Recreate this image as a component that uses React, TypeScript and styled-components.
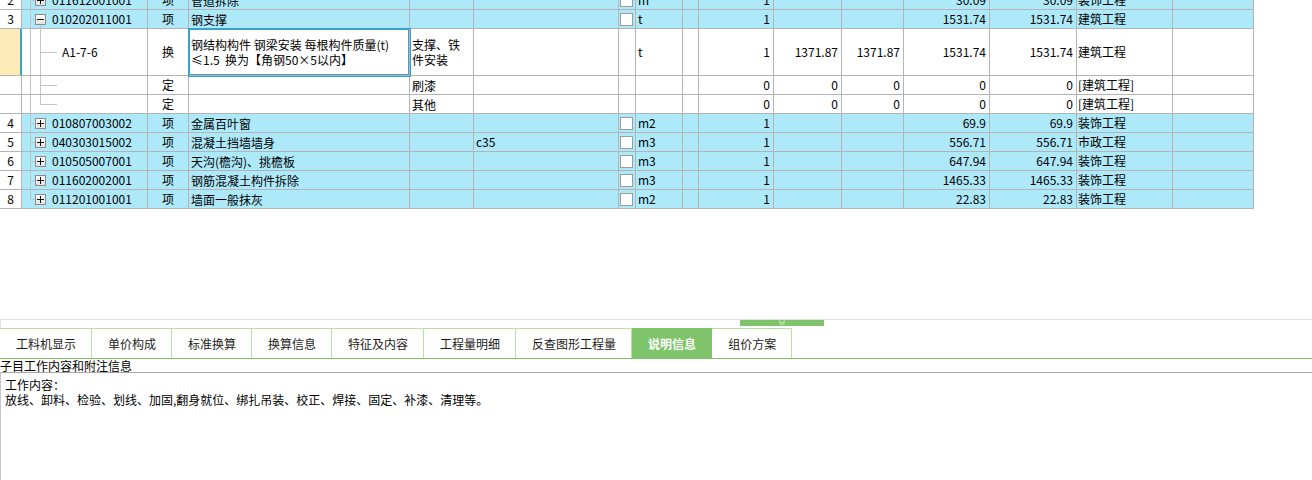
import React from "react";
import styled, { createGlobalStyle } from "styled-components";

const COLS =
  "22px 126px 41px 221px 64px 145px 17px 47px 16px 75px 68px 62px 86px 87px 96px 81px";
const LINE = "#b4b4b4";
const GUIDE = "#c4c4c4";
const ROW_BLUE = "#aee9fa";
const ACCENT = "#3a9fd1";
const GREEN = "#7fc46b";
const GREEN_LIGHT = "#b6e3a1";

const GlobalStyle = createGlobalStyle`
  html, body {
    margin: 0;
    padding: 0;
    background: #fff;
  }
  body {
    font-family: "Noto Sans CJK SC", "Noto Sans", sans-serif;
    font-size: 12px;
    color: #000;
    overflow: hidden;
  }
`;

const Page = styled.div`
  width: 1312px;
  height: 480px;
  display: flex;
  flex-direction: column;
  overflow: hidden;
`;

const GridArea = styled.div`
  height: 319px;
  flex: none;
  overflow: hidden;
`;

const Table = styled.div`
  width: 1254px;
  margin-top: -9px;
`;

const Row = styled.div<{ $h: number; $blue: boolean }>`
  display: grid;
  grid-template-columns: ${COLS};
  height: ${(p) => p.$h}px;
  background: ${(p) => (p.$blue ? ROW_BLUE : "#fff")};
`;

const Cell = styled.div<{ $align?: "left" | "right" | "center" }>`
  box-sizing: border-box;
  border-right: 1px solid ${LINE};
  border-bottom: 1px solid ${LINE};
  display: flex;
  align-items: center;
  justify-content: ${(p) =>
    p.$align === "right" ? "flex-end" : p.$align === "center" ? "center" : "flex-start"};
  padding: ${(p) => (p.$align === "right" ? "0 3px 0 0" : p.$align === "center" ? "0" : "0 0 0 2px")};
  line-height: 14px;
  white-space: nowrap;
  overflow: hidden;
`;

const RowHead = styled(Cell)<{ $selected?: boolean }>`
  background: ${(p) => (p.$selected ? "#feecb8" : "#fff")};
  border-right: ${(p) => (p.$selected ? `2px solid ${ACCENT}` : `1px solid ${LINE}`)};
`;

type Guide = "root" | "rootHalf" | "rootStub" | "child" | "childHalf" | "childStub" | "childTail";

const guideLayer: Record<Guide, string> = {
  root: "8px 0 / 1px 100%",
  rootHalf: "8px 0 / 1px 50%",
  rootStub: "8px 50% / 5px 1px",
  child: "18px 0 / 1px 100%",
  childHalf: "18px 0 / 1px 50%",
  childStub: "18px 50% / 17px 1px",
  childTail: "18px 100% / 1px 4px",
};

const CodeCell = styled(Cell)<{ $guides: Guide[]; $indent: number }>`
  padding-left: ${(p) => p.$indent}px;
  background: ${(p) =>
    p.$guides.map((g) => `linear-gradient(${GUIDE}, ${GUIDE}) ${guideLayer[g]} no-repeat`).join(", ")};
`;

const WrapCell = styled(Cell)`
  white-space: normal;
  line-height: 15px;
`;

const EditCell = styled(WrapCell)`
  position: relative;
  z-index: 1;
  background: #fff;
  box-shadow: 0 0 0 1px ${ACCENT}, inset 0 0 0 1px ${ACCENT};
`;

const CheckCell = styled(Cell)`
  padding: 0;
`;

const MajorCell = styled(Cell)`
  padding-left: 1px;
`;

const Toggle = styled.span`
  box-sizing: border-box;
  flex: none;
  width: 11px;
  height: 11px;
  margin: 0 6px 0 13px;
  border: 1px solid #8c8c8c;
  background: linear-gradient(#fff, #e2e2e2);
  display: flex;
  align-items: center;
  justify-content: center;
`;

const Check = styled.span`
  box-sizing: border-box;
  width: 13px;
  height: 13px;
  margin-left: 1px;
  border: 1px solid #9c9c9c;
  background: #fff;
`;

const Splitter = styled.div`
  box-sizing: border-box;
  height: 9px;
  flex: none;
  border-top: 1px solid #e1e1e1;
  border-left: 1px solid #e1e1e1;
  display: flex;
  align-items: flex-start;
`;

const Handle = styled.div`
  margin-left: 739px;
  width: 84px;
  height: 6px;
  background: ${GREEN};
  display: flex;
  justify-content: center;
  align-items: flex-end;
`;

const TabBar = styled.div`
  box-sizing: border-box;
  height: 31px;
  flex: none;
  display: flex;
  border-bottom: 1px solid ${GREEN};
`;

const Tab = styled.div<{ $active?: boolean }>`
  box-sizing: border-box;
  height: 30px;
  padding: 0 15px 0 16px;
  border-top: 1px solid ${(p) => (p.$active ? GREEN : GREEN_LIGHT)};
  border-right: 1px solid ${(p) => (p.$active ? GREEN : GREEN_LIGHT)};
  background: ${(p) => (p.$active ? GREEN : "#fff")};
  color: ${(p) => (p.$active ? "#fff" : "#1c1c1c")};
  font-weight: ${(p) => (p.$active ? "bold" : "normal")};
  display: flex;
  align-items: center;
  white-space: nowrap;
`;

const InfoTitle = styled.div`
  height: 14px;
  flex: none;
  box-sizing: border-box;
  line-height: 13px;
  border-bottom: 1px solid #a9a9a9;
  white-space: nowrap;
`;

const InfoBody = styled.div`
  flex: 1;
  border-left: 1px solid #c6c6ce;
  padding: 4px 0 0 4px;
  line-height: 15px;
`;

const PlusMinus = ({ open }: { open?: boolean }) => (
  <svg width="7" height="7" viewBox="0 0 7 7">
    <path d="M0 3.5H7" stroke="#111" strokeWidth="1" />
    {!open && <path d="M3.5 0V7" stroke="#111" strokeWidth="1" />}
  </svg>
);

type RowData = {
  num?: string;
  toggle?: "+" | "-";
  code?: string;
  guides: Guide[];
  indent: number;
  type: string;
  name: React.ReactNode;
  feature?: React.ReactNode;
  spec?: string;
  check?: boolean;
  unit?: string;
  qty?: string;
  p1?: string;
  p2?: string;
  t1?: string;
  t2?: string;
  major?: string;
  blue: boolean;
  h: number;
  selected?: boolean;
  editing?: boolean;
};

const item = (
  num: string,
  code: string,
  name: string,
  unit: string,
  total: string,
  major: string,
  extra: Partial<RowData> = {}
): RowData => ({
  num,
  toggle: "+",
  code,
  guides: ["root", "rootStub"],
  indent: 0,
  type: "项",
  name,
  check: true,
  unit,
  qty: "1",
  t1: total,
  t2: total,
  major,
  blue: true,
  h: 19,
  ...extra,
});

const rows: RowData[] = [
  item("2", "011612001001", "管道拆除", "m", "30.09", "装饰工程"),
  item("3", "010202011001", "钢支撑", "t", "1531.74", "建筑工程", {
    toggle: "-",
    guides: ["root", "rootStub", "childTail"],
  }),
  {
    code: "A1-7-6",
    guides: ["root", "child", "childStub"],
    indent: 40,
    type: "换",
    name: (
      <>
        钢结构构件 钢梁安装 每根构件质量(t)
        <br />
        ≤1.5&nbsp;&nbsp;换为【角钢50×5以内】
      </>
    ),
    feature: (
      <>
        支撑、铁
        <br />
        件安装
      </>
    ),
    unit: "t",
    qty: "1",
    p1: "1371.87",
    p2: "1371.87",
    t1: "1531.74",
    t2: "1531.74",
    major: "建筑工程",
    blue: false,
    h: 47,
    selected: true,
    editing: true,
  },
  {
    guides: ["root", "child", "childStub"],
    indent: 0,
    type: "定",
    name: "",
    feature: "刷漆",
    qty: "0",
    p1: "0",
    p2: "0",
    t1: "0",
    t2: "0",
    major: "[建筑工程]",
    blue: false,
    h: 19,
  },
  {
    guides: ["root", "childHalf", "childStub"],
    indent: 0,
    type: "定",
    name: "",
    feature: "其他",
    qty: "0",
    p1: "0",
    p2: "0",
    t1: "0",
    t2: "0",
    major: "[建筑工程]",
    blue: false,
    h: 19,
  },
  item("4", "010807003002", "金属百叶窗", "m2", "69.9", "装饰工程"),
  item("5", "040303015002", "混凝土挡墙墙身", "m3", "556.71", "市政工程", { spec: "c35" }),
  item("6", "010505007001", "天沟(檐沟)、挑檐板", "m3", "647.94", "装饰工程"),
  item("7", "011602002001", "钢筋混凝土构件拆除", "m3", "1465.33", "装饰工程"),
  item("8", "011201001001", "墙面一般抹灰", "m2", "22.83", "装饰工程", {
    guides: ["rootHalf", "rootStub"],
  }),
];

const tabs = [
  "工料机显示",
  "单价构成",
  "标准换算",
  "换算信息",
  "特征及内容",
  "工程量明细",
  "反查图形工程量",
  "说明信息",
  "组价方案",
];

const BillRow = ({ r }: { r: RowData }) => {
  const NameCell = r.editing ? EditCell : WrapCell;
  return (
    <Row $h={r.h} $blue={r.blue}>
      <RowHead $align="center" $selected={r.selected}>
        {r.num}
      </RowHead>
      <CodeCell $guides={r.guides} $indent={r.indent}>
        {r.toggle && (
          <Toggle>
            <PlusMinus open={r.toggle === "-"} />
          </Toggle>
        )}
        {r.code}
      </CodeCell>
      <Cell $align="center">{r.type}</Cell>
      <NameCell>{r.name}</NameCell>
      <WrapCell>{r.feature}</WrapCell>
      <Cell>{r.spec}</Cell>
      <CheckCell>{r.check && <Check />}</CheckCell>
      <Cell>{r.unit}</Cell>
      <Cell />
      <Cell $align="right">{r.qty}</Cell>
      <Cell $align="right">{r.p1}</Cell>
      <Cell $align="right">{r.p2}</Cell>
      <Cell $align="right">{r.t1}</Cell>
      <Cell $align="right">{r.t2}</Cell>
      <MajorCell>{r.major}</MajorCell>
      <Cell />
    </Row>
  );
};

const App = () => {
  return (
    <Page>
      <GlobalStyle />
      <GridArea>
        <Table>
          {rows.map((r, i) => (
            <BillRow key={i} r={r} />
          ))}
        </Table>
      </GridArea>
      <Splitter>
        <Handle>
          <svg width="10" height="6" viewBox="0 0 10 6">
            <path d="M2 0.5L5 3L8 0.5M2 2.5L5 5L8 2.5" fill="none" stroke="#d3efc6" strokeWidth="1" />
          </svg>
        </Handle>
      </Splitter>
      <TabBar>
        {tabs.map((t) => (
          <Tab key={t} $active={t === "说明信息"}>
            {t}
          </Tab>
        ))}
      </TabBar>
      <InfoTitle>子目工作内容和附注信息</InfoTitle>
      <InfoBody>
        工作内容：
        <br />
        放线、卸料、检验、划线、加固,翻身就位、绑扎吊装、校正、焊接、固定、补漆、清理等。
      </InfoBody>
    </Page>
  );
};

export default App;
